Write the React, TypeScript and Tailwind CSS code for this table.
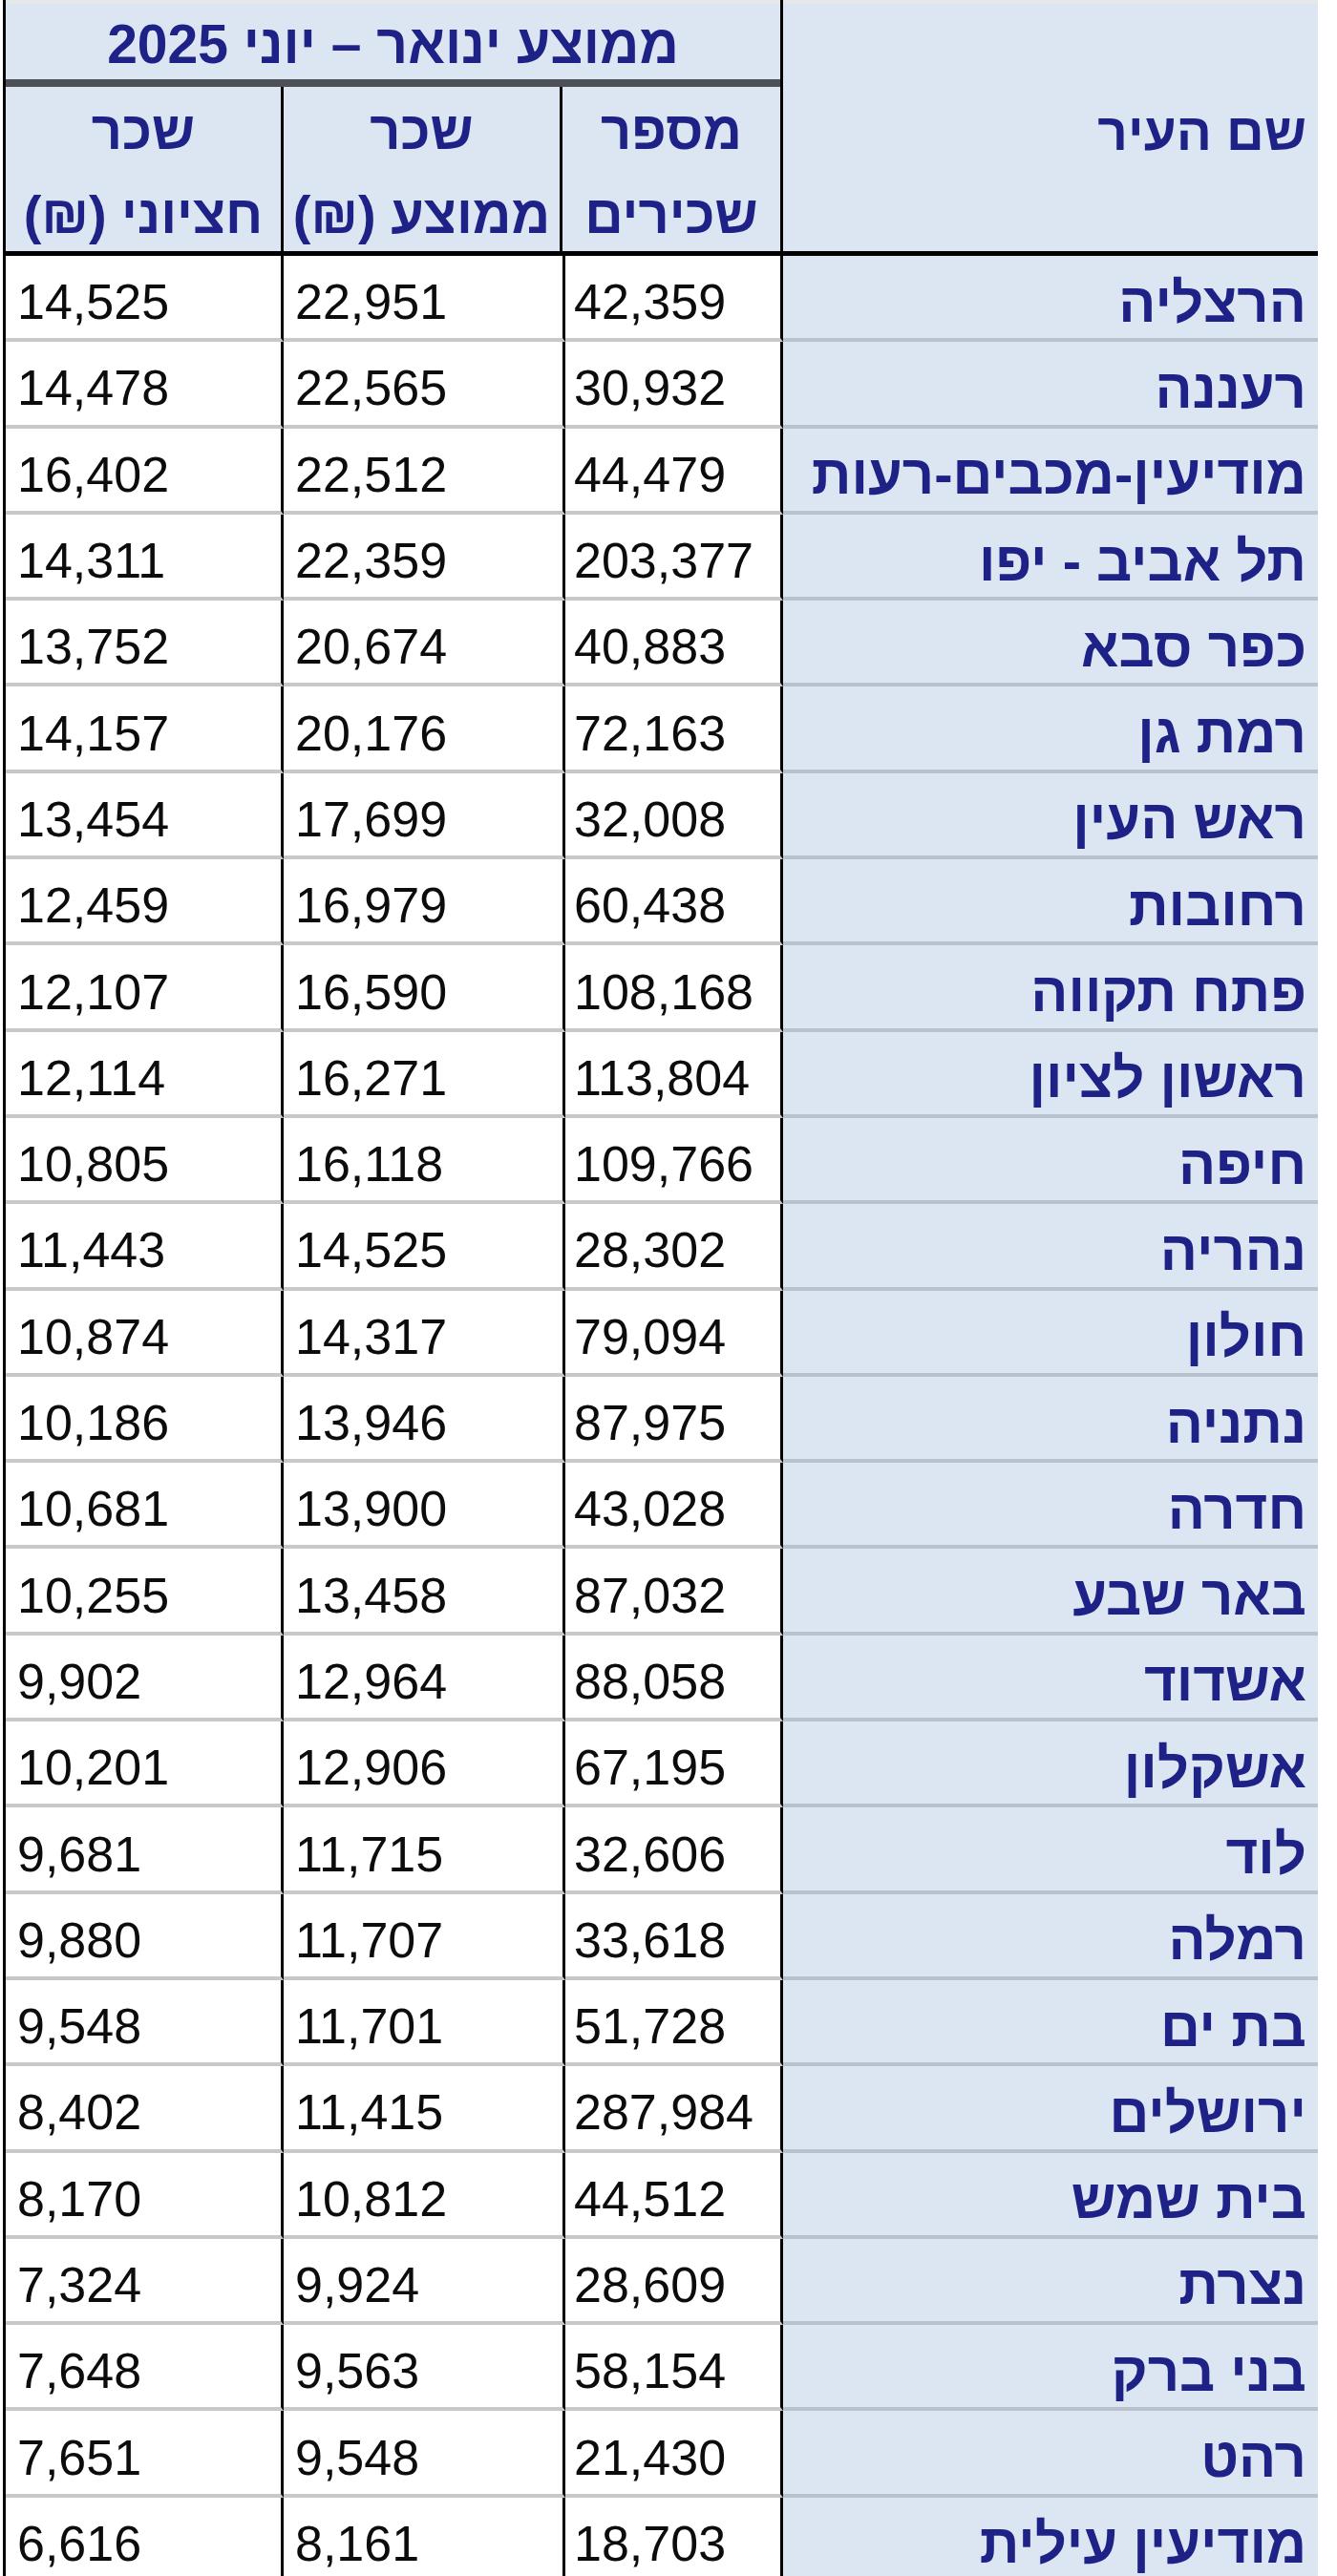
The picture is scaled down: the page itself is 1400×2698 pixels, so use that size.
import React from 'react';

type Row = {
  city: string;
  employees: string;
  avg: string;
  median: string;
};

const rows: Row[] = [
  { city: 'הרצליה', employees: '42,359', avg: '22,951', median: '14,525' },
  { city: 'רעננה', employees: '30,932', avg: '22,565', median: '14,478' },
  { city: 'מודיעין-מכבים-רעות', employees: '44,479', avg: '22,512', median: '16,402' },
  { city: 'תל אביב - יפו', employees: '203,377', avg: '22,359', median: '14,311' },
  { city: 'כפר סבא', employees: '40,883', avg: '20,674', median: '13,752' },
  { city: 'רמת גן', employees: '72,163', avg: '20,176', median: '14,157' },
  { city: 'ראש העין', employees: '32,008', avg: '17,699', median: '13,454' },
  { city: 'רחובות', employees: '60,438', avg: '16,979', median: '12,459' },
  { city: 'פתח תקווה', employees: '108,168', avg: '16,590', median: '12,107' },
  { city: 'ראשון לציון', employees: '113,804', avg: '16,271', median: '12,114' },
  { city: 'חיפה', employees: '109,766', avg: '16,118', median: '10,805' },
  { city: 'נהריה', employees: '28,302', avg: '14,525', median: '11,443' },
  { city: 'חולון', employees: '79,094', avg: '14,317', median: '10,874' },
  { city: 'נתניה', employees: '87,975', avg: '13,946', median: '10,186' },
  { city: 'חדרה', employees: '43,028', avg: '13,900', median: '10,681' },
  { city: 'באר שבע', employees: '87,032', avg: '13,458', median: '10,255' },
  { city: 'אשדוד', employees: '88,058', avg: '12,964', median: '9,902' },
  { city: 'אשקלון', employees: '67,195', avg: '12,906', median: '10,201' },
  { city: 'לוד', employees: '32,606', avg: '11,715', median: '9,681' },
  { city: 'רמלה', employees: '33,618', avg: '11,707', median: '9,880' },
  { city: 'בת ים', employees: '51,728', avg: '11,701', median: '9,548' },
  { city: 'ירושלים', employees: '287,984', avg: '11,415', median: '8,402' },
  { city: 'בית שמש', employees: '44,512', avg: '10,812', median: '8,170' },
  { city: 'נצרת', employees: '28,609', avg: '9,924', median: '7,324' },
  { city: 'בני ברק', employees: '58,154', avg: '9,563', median: '7,648' },
  { city: 'רהט', employees: '21,430', avg: '9,548', median: '7,651' },
  { city: 'מודיעין עילית', employees: '18,703', avg: '8,161', median: '6,616' },
];

const font = { fontFamily: '"Liberation Sans", "DejaVu Sans", sans-serif' };

export default function App() {
  return (
    <div className="w-[1400px] bg-white" style={font}>
      <div className="ml-[3px] w-[1377px] border-l-[3px] border-black">
        {/* כותרת */}
        <div className="flex border-b-[5px] border-black">
          <div className="w-[814px] flex flex-col border-r-[3px] border-black">
            <div
              dir="rtl"
              className="h-[83px] border-t-[4px] border-[#e6e7e9] bg-[#dce6f2] flex items-center justify-center pt-[6px] text-[57px] font-bold text-[#1e2287] leading-none"
            >
              ממוצע ינואר – יוני 2025
            </div>
            <div className="h-[8px] bg-[#4d5056]" />
            <div className="flex h-[172px] bg-[#dce6f2] text-[56px] font-bold text-[#1e2287] leading-[88px]">
              <div dir="rtl" className="w-[291px] border-r-[3px] border-black flex flex-col items-center justify-center pt-[8px]">
                <span>שכר</span>
                <span className="whitespace-nowrap">חציוני (₪)</span>
              </div>
              <div dir="rtl" className="w-[292px] border-r-[3px] border-black flex flex-col items-center justify-center pt-[8px]">
                <span>שכר</span>
                <span className="whitespace-nowrap">ממוצע (₪)</span>
              </div>
              <div dir="rtl" className="flex-1 flex flex-col items-center justify-center pt-[8px]">
                <span>מספר</span>
                <span>שכירים</span>
              </div>
            </div>
          </div>
          <div
            dir="rtl"
            className="w-[560px] border-t-[4px] border-[#e6e7e9] bg-[#dce6f2] flex items-center px-[12px] pt-[10px] text-[55px] font-bold text-[#1e2287]"
          >
            שם העיר
          </div>
        </div>

        {/* שורות */}
        {rows.map(row => (
          <div key={row.city} className="flex h-[90.3px] text-[52px] text-[#0c0c0c]">
            <div className="w-[291px] border-r-[3px] border-r-black border-b-[4px] border-b-[#c6c8ca] flex items-center pl-[12px] pt-[10px]">
              {row.median}
            </div>
            <div className="w-[295px] border-r-[3px] border-r-black border-b-[4px] border-b-[#c6c8ca] flex items-center pl-[12px] pt-[10px]">
              {row.avg}
            </div>
            <div className="w-[228px] border-r-[3px] border-r-black border-b-[4px] border-b-[#c6c8ca] flex items-center pl-[9px] pt-[10px]">
              {row.employees}
            </div>
            <div
              dir="rtl"
              className="w-[560px] bg-[#dce6f2] border-b-[4px] border-b-[#b8c1cc] flex items-center px-[12px] pt-[10px] text-[58px] font-bold text-[#1e2287] whitespace-nowrap"
            >
              {row.city}
            </div>
          </div>
        ))}
      </div>
    </div>
  );
}
